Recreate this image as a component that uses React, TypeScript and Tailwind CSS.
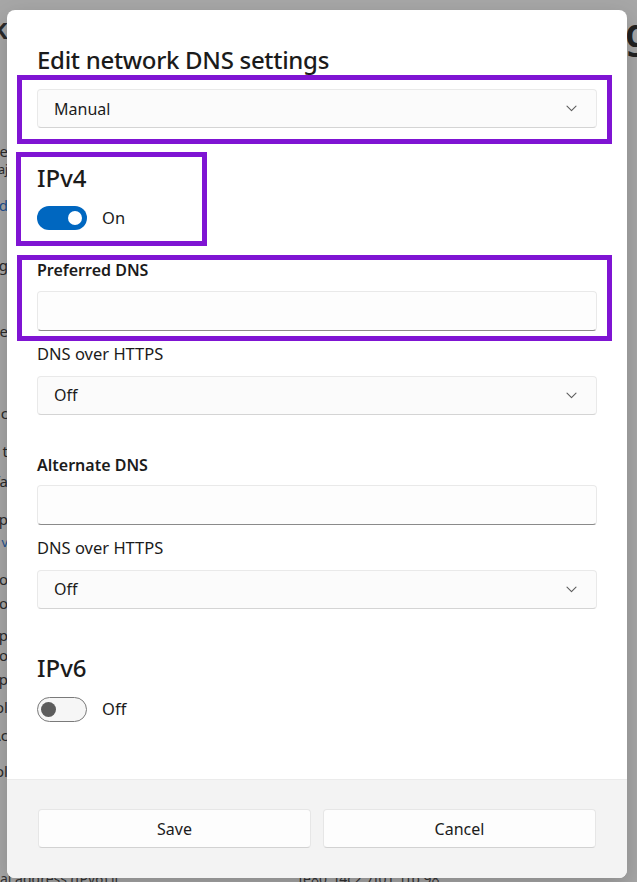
import { FC, ReactNode } from "react";

const leftBits: { t: string; y: string; c?: string }[] = [
  { t: "Network k", y: "h-[44px] text-[28px] font-semibold" },
  { t: "", y: "h-[86px]" },
  { t: "Use", y: "h-[20px] text-[15px]" },
  { t: "apps use to connect aj", y: "h-[34px] text-[12px]" },
  { t: "Learn more abd", y: "h-[60px] text-[15px]", c: "text-[#1c4f8f]" },
  { t: "Settin g", y: "h-[66px] text-[15px] underline" },
  { t: "Use e", y: "h-[82px] text-[15px]" },
  { t: "Turn off c", y: "h-[38px] text-[15px]" },
  { t: "Limit t", y: "h-[30px] text-[15px]" },
  { t: "Metered fa", y: "h-[38px] text-[15px]" },
  { t: "IP p", y: "h-[24px] text-[15px]" },
  { t: "v", y: "h-[36px] text-[13px]", c: "text-[#1c4f8f]" },
  { t: "Lo", y: "h-[24px] text-[15px]" },
  { t: "Do", y: "h-[32px] text-[15px]" },
  { t: "Up", y: "h-[20px] text-[15px]" },
  { t: "Co", y: "h-[24px] text-[15px]" },
  { t: "Up", y: "h-[28px] text-[15px]" },
  { t: "Pol", y: "h-[28px] text-[15px]" },
  { t: "Ac", y: "h-[36px] text-[15px]" },
  { t: "Pol", y: "h-[36px] text-[15px]" },
];

const Chevron: FC = () => (
  <svg width="11" height="7" viewBox="0 0 11 7" fill="none">
    <path d="M1 1.2 L5.5 5.6 L10 1.2" stroke="#5d5d5d" strokeWidth="1.1" strokeLinecap="round" strokeLinejoin="round" />
  </svg>
);

const Select: FC<{ value: string }> = ({ value }) => (
  <div className="h-[39px] flex items-center justify-between pl-[16px] pr-[19px] rounded-[4px] bg-[#fbfbfb] border border-[#e9e9e9] border-b-[#d4d4d4] text-[16px] text-[#1b1b1b]">
    <span>{value}</span>
    <Chevron />
  </div>
);

const Input: FC = () => (
  <div className="h-[40px] rounded-[4px] bg-[#fdfdfd] border border-[#e9e9e9] border-b-[#8a8a8a]" />
);

const Toggle: FC<{ on: boolean }> = ({ on }) =>
  on ? (
    <div className="w-[50px] h-[24px] rounded-full bg-[#0067c0] flex items-center justify-end pr-[5px]">
      <div className="w-[14px] h-[14px] rounded-full bg-white" />
    </div>
  ) : (
    <div className="w-[50px] h-[25px] rounded-full bg-[#f6f6f6] border border-[#7a7a7a] flex items-center pl-[3px]">
      <div className="w-[15px] h-[15px] rounded-full bg-[#5c5c5c]" />
    </div>
  );

const Marked: FC<{ children: ReactNode; box: string }> = ({ children, box }) => (
  <div className="relative">
    {children}
    <div className={`absolute border-[5px] border-[#7f14d3] pointer-events-none ${box}`} />
  </div>
);

const Button: FC<{ label: string }> = ({ label }) => (
  <button className="flex-1 h-[39px] rounded-[4px] bg-[#fdfdfd] border border-[#e6e6e6] border-b-[#d2d2d2] text-[16px] text-[#1b1b1b]">
    {label}
  </button>
);

export default function App() {
  return (
    <div
      className="relative w-[637px] h-[882px] overflow-hidden bg-[#a7a7a7] flex text-[#2a2a2a]"
      style={{ fontFamily: '"Noto Sans", "Open Sans", sans-serif' }}
    >
      {/* dimmed settings page behind the dialog */}
      <div className="w-[8px] overflow-hidden flex flex-col items-end pt-[14px] leading-none">
        {leftBits.map((b, i) => (
          <div key={i} className={`whitespace-nowrap flex items-start ${b.y} ${b.c ?? ""}`}>
            {b.t}
          </div>
        ))}
      </div>
      <div className="flex-1 flex flex-col">
        <div className="flex-1" />
        <div className="h-[6px] overflow-hidden text-[14px] leading-none whitespace-nowrap text-[#333] -ml-[8px]">
          <div className="-mt-[4px] flex gap-[180px]">
            <span>al address (IPv6) ll</span>
            <span>fe80::f4c2:7f01:1fb:98</span>
          </div>
        </div>
      </div>
      <div className="w-[10px] overflow-hidden pt-[12px] text-[40px] font-semibold leading-none text-[#222] whitespace-nowrap -ml-[10px] flex justify-start">
        <span className="-ml-[2px]">g</span>
      </div>

      {/* dialog */}
      <div className="absolute left-[7px] top-[10px] w-[620px] h-[868px] rounded-[8px] bg-white shadow-[0_8px_24px_rgba(0,0,0,0.18)] overflow-hidden flex flex-col">
        <div className="flex flex-col px-[30px] pt-[34px]">
          <h1 className="h-[32px] flex items-center text-[24px] font-medium text-[#1b1b1b] tracking-[-0.3px]">
            Edit network DNS settings
          </h1>

          <div className="mt-[13px]">
            <Marked box="-left-[20px] -right-[15px] -top-[14px] -bottom-[16px]">
              <Select value="Manual" />
            </Marked>
          </div>

          <div className="mt-[34px]">
            <Marked box="-left-[21px] w-[191px] -top-[10px] -bottom-[15px]">
              <div className="h-[32px] flex items-center text-[24px] font-medium text-[#1b1b1b]">IPv4</div>
              <div className="mt-[12px] flex items-center gap-[15px]">
                <Toggle on />
                <span className="text-[16.5px] text-[#1b1b1b]">On</span>
              </div>
            </Marked>
          </div>

          <div className="mt-[29px]">
            <Marked box="-left-[20px] -right-[15px] -top-[5px] -bottom-[10px]">
              <div className="h-[20px] flex items-center text-[16px] font-semibold text-[#1b1b1b]">Preferred DNS</div>
              <div className="mt-[11px]">
                <Input />
              </div>
            </Marked>
          </div>

          <div className="mt-[14px] h-[20px] flex items-center text-[16.5px] text-[#1b1b1b]">DNS over HTTPS</div>
          <div className="mt-[11px]">
            <Select value="Off" />
          </div>

          <div className="mt-[40px] h-[20px] flex items-center text-[16px] font-semibold text-[#1b1b1b]">Alternate DNS</div>
          <div className="mt-[10px]">
            <Input />
          </div>

          <div className="mt-[14px] h-[20px] flex items-center text-[16.5px] text-[#1b1b1b]">DNS over HTTPS</div>
          <div className="mt-[11px]">
            <Select value="Off" />
          </div>

          <div className="mt-[43px] h-[32px] flex items-center text-[24px] font-medium text-[#1b1b1b]">IPv6</div>
          <div className="mt-[13px] flex items-center gap-[15px]">
            <Toggle on={false} />
            <span className="text-[16.5px] text-[#1b1b1b]">Off</span>
          </div>
        </div>

        <div className="mt-auto h-[99px] bg-[#f3f3f3] border-t border-[#ebebeb] px-[31px] pt-[29px] flex gap-[12px]">
          <Button label="Save" />
          <Button label="Cancel" />
        </div>
      </div>
    </div>
  );
}
